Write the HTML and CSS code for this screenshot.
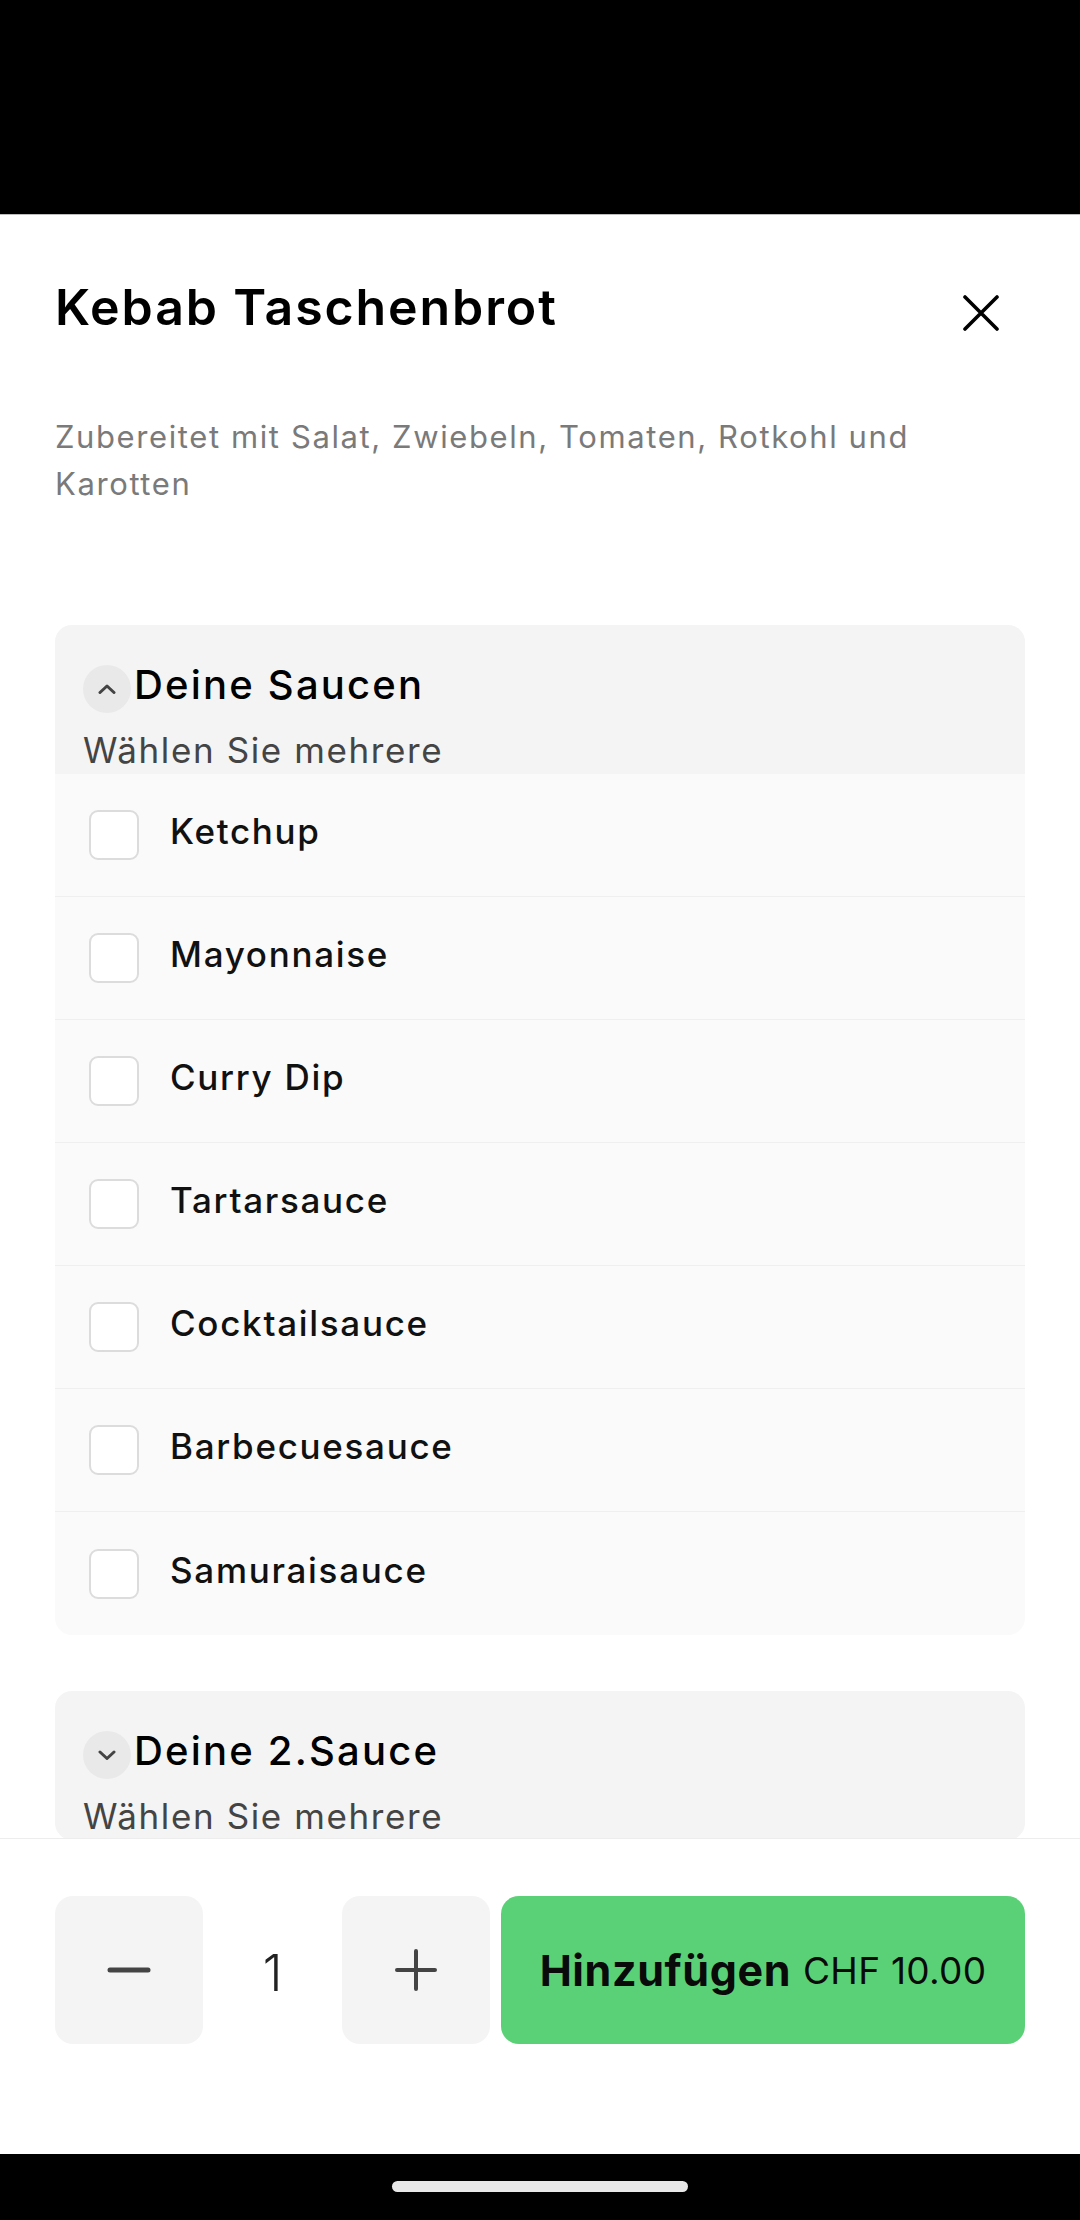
FILE: index.html
```html
<!DOCTYPE html>
<html lang="de">
<head>
<meta charset="utf-8">
<title>Kebab Taschenbrot</title>
<link rel="stylesheet" href="styles.css">
</head>
<body>
<div class="screen">
  <div class="status"></div>
  <div class="sheet">
    <div class="scroll">
      <div class="head">
        <h1 class="title">Kebab Taschenbrot</h1>
        <button class="close" aria-label="Schliessen">
          <svg viewBox="0 0 36 36" width="36" height="36"><path d="M2 2L34 34M34 2L2 34" stroke="#000" stroke-width="3.6" stroke-linecap="round" fill="none"/></svg>
        </button>
      </div>
      <p class="desc">Zubereitet mit Salat, Zwiebeln, Tomaten, Rotkohl und Karotten</p>

      <section class="card">
        <div class="card-head">
          <div class="card-title-row">
            <span class="chev"><svg viewBox="0 0 18 10" width="18" height="10"><path d="M2 8.5L9 2L16 8.5" stroke="#444" stroke-width="3" fill="none" stroke-linecap="round" stroke-linejoin="round"/></svg></span>
            <h2 class="card-title">Deine Saucen</h2>
          </div>
          <div class="card-sub">Wählen Sie mehrere</div>
        </div>
        <ul class="opts">
          <li class="opt"><span class="box"></span><span class="lbl">Ketchup</span></li>
          <li class="opt"><span class="box"></span><span class="lbl">Mayonnaise</span></li>
          <li class="opt"><span class="box"></span><span class="lbl">Curry Dip</span></li>
          <li class="opt"><span class="box"></span><span class="lbl">Tartarsauce</span></li>
          <li class="opt"><span class="box"></span><span class="lbl">Cocktailsauce</span></li>
          <li class="opt"><span class="box"></span><span class="lbl">Barbecuesauce</span></li>
          <li class="opt"><span class="box"></span><span class="lbl">Samuraisauce</span></li>
        </ul>
      </section>

      <section class="card card-2">
        <div class="card-head">
          <div class="card-title-row">
            <span class="chev"><svg viewBox="0 0 18 10" width="18" height="10"><path d="M2 2L9 8.5L16 2" stroke="#444" stroke-width="3" fill="none" stroke-linecap="round" stroke-linejoin="round"/></svg></span>
            <h2 class="card-title">Deine 2.Sauce</h2>
          </div>
          <div class="card-sub">Wählen Sie mehrere</div>
        </div>
      </section>
    </div>

    <div class="bottom">
      <button class="step" aria-label="Weniger">
        <svg viewBox="0 0 44 44" width="44" height="44"><path d="M3 22H41" stroke="#444" stroke-width="5" stroke-linecap="round"/></svg>
      </button>
      <div class="qty">1</div>
      <button class="step" aria-label="Mehr">
        <svg viewBox="0 0 44 44" width="44" height="44"><path d="M3 22H41M22 3V41" stroke="#444" stroke-width="4" stroke-linecap="round"/></svg>
      </button>
      <button class="add"><span class="add-main">Hinzufügen</span><span class="add-price">CHF 10.00</span></button>
    </div>
  </div>
  <div class="navbar"><span class="pill"></span></div>
</div>
</body>
</html>
```

FILE: styles.css
```css
* { box-sizing: border-box; }
html, body { margin: 0; padding: 0; }
body {
  width: 1080px;
  height: 2220px;
  overflow: hidden;
  background: #000;
  font-family: "Inter", "Noto Sans", "Liberation Sans", sans-serif;
  color: #000;
}
.screen {
  width: 1080px;
  height: 2220px;
  display: flex;
  flex-direction: column;
}
.status {
  height: 215px;
  flex: none;
  background: #000;
}
.sheet {
  flex: none;
  height: 1939px;
  background: #fff;
  display: flex;
  flex-direction: column;
  box-shadow: 0 -1px 0 #bdbdbd;
}
.scroll {
  flex: none;
  height: 1623px;
  overflow: hidden;
  padding: 60px 55px 0;
}
.head {
  display: flex;
  align-items: center;
  justify-content: space-between;
  height: 64px;
}
.title {
  margin: 0;
  font-size: 50px;
  line-height: 64px;
  font-weight: 600;
  letter-spacing: 1.9px;
}
.close {
  width: 48px;
  height: 48px;
  margin: 12px 20px 0 0;
  padding: 0;
  border: 0;
  background: none;
  display: flex;
  align-items: center;
  justify-content: center;
}
.desc {
  margin: 74px 0 0;
  max-width: 920px;
  font-size: 31px;
  line-height: 47px;
  color: #7a7a7a;
  font-weight: 400;
  letter-spacing: 1.6px;
}
.card {
  margin-top: 118px;
  border-radius: 17px;
  overflow: hidden;
  background: #fafafa;
}
.card-2 {
  margin-top: 56px;
  background: #f4f4f4;
}
.card-head {
  background: #f4f4f4;
  padding: 40px 28px 2px;
  height: 149px;
}
.card-title-row {
  display: flex;
  align-items: center;
  gap: 3px;
  height: 48px;
}
.chev {
  width: 48px;
  height: 48px;
  border-radius: 50%;
  background: #e9e9e9;
  display: flex;
  align-items: center;
  justify-content: center;
  flex: none;
}
.card-title {
  margin: 0 0 8px;
  font-size: 40px;
  line-height: 48px;
  font-weight: 500;
  color: #000;
  letter-spacing: 2.2px;
}
.card-sub {
  margin-top: 15px;
  font-size: 35px;
  line-height: 44px;
  color: #444;
  letter-spacing: 1.6px;
}
.opts {
  list-style: none;
  margin: 0;
  padding: 0;
}
.opt {
  height: 123px;
  display: flex;
  align-items: center;
  padding-left: 34px;
  gap: 31px;
  border-bottom: 1px solid #efefef;
}
.opt:last-child { border-bottom: 0; }
.box {
  width: 50px;
  height: 50px;
  border: 2px solid #dcdcdc;
  border-radius: 9px;
  background: #fff;
  flex: none;
}
.lbl {
  font-size: 35px;
  font-weight: 500;
  color: #111;
  letter-spacing: 1.7px;
  margin-bottom: 8px;
}
.bottom {
  flex: none;
  height: 316px;
  border-top: 1px solid #ededed;
  padding: 57px 55px 0;
  display: flex;
  align-items: flex-start;
}
.step {
  width: 148px;
  height: 148px;
  border: 0;
  border-radius: 18px;
  background: #f4f4f4;
  display: flex;
  align-items: center;
  justify-content: center;
  padding: 0;
  flex: none;
}
.qty {
  width: 139px;
  height: 148px;
  display: flex;
  align-items: center;
  justify-content: center;
  font-size: 50px;
  font-weight: 300;
  color: #222;
  padding-top: 6px;
}
.add {
  flex: 1;
  margin-left: 11px;
  height: 148px;
  border: 0;
  border-radius: 18px;
  background: #5bd177;
  display: flex;
  align-items: center;
  justify-content: center;
  gap: 12px;
  font-family: inherit;
  color: #0a0a0a;
  padding: 0;
}
.add-main {
  font-size: 43px;
  font-weight: 700;
  letter-spacing: 0.6px;
}
.add-price {
  font-size: 37px;
  font-weight: 400;
  letter-spacing: 0.3px;
}
.navbar {
  flex: 1;
  background: #000;
  display: flex;
  justify-content: center;
  padding-top: 27px;
}
.pill {
  width: 296px;
  height: 11px;
  border-radius: 6px;
  background: #e8e8e8;
}
```
